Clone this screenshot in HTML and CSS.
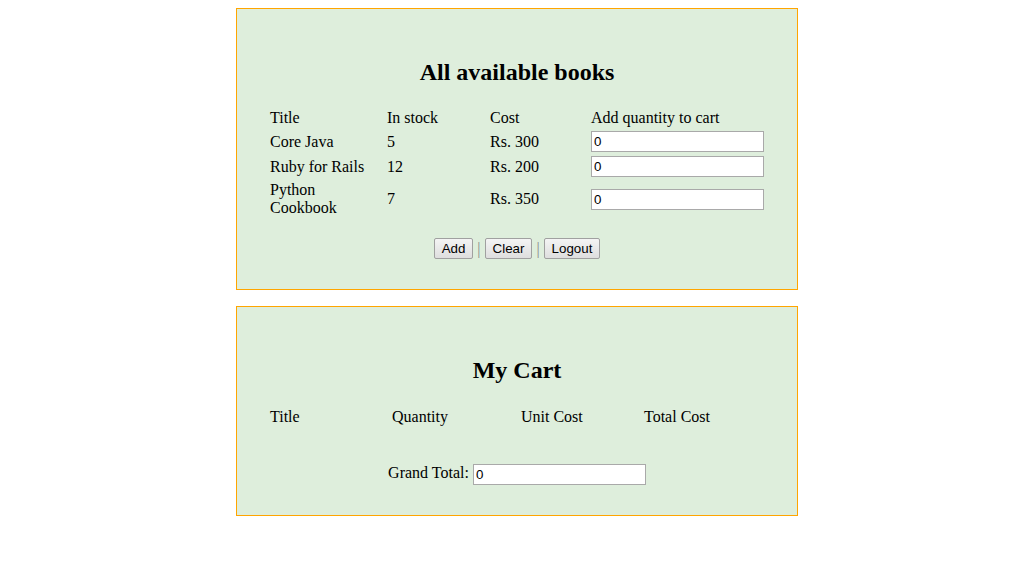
FILE: index.html
```html
<!DOCTYPE html>
<html>
<head>
<meta charset="utf-8">
<title>Books</title>
<link rel="stylesheet" href="styles.css">
</head>
<body>
<div class="panel">
  <h2 class="heading">All available books</h2>
  <table class="grid">
    <colgroup>
      <col class="c-books-1"><col class="c-books-2"><col class="c-books-3"><col class="c-books-4">
    </colgroup>
    <tr><th>Title</th><th>In stock</th><th>Cost</th><th>Add quantity to cart</th></tr>
    <tr><td>Core Java</td><td>5</td><td>Rs. 300</td><td><input class="field" type="text" value="0"></td></tr>
    <tr><td>Ruby for Rails</td><td>12</td><td>Rs. 200</td><td><input class="field" type="text" value="0"></td></tr>
    <tr><td>Python Cookbook</td><td>7</td><td>Rs. 350</td><td><input class="field" type="text" value="0"></td></tr>
  </table>
  <div class="actions">
    <button class="btn" type="button">Add</button>
    <span class="sep">|</span>
    <button class="btn" type="button">Clear</button>
    <span class="sep">|</span>
    <button class="btn" type="button">Logout</button>
  </div>
</div>
<div class="panel cart">
  <h2 class="heading">My Cart</h2>
  <table class="grid">
    <colgroup>
      <col class="c-cart-1"><col class="c-cart-2"><col class="c-cart-3"><col class="c-cart-4">
    </colgroup>
    <tr><th>Title</th><th>Quantity</th><th>Unit Cost</th><th>Total Cost</th></tr>
  </table>
  <div class="total">Grand Total: <input class="field" type="text" value="0"></div>
</div>
</body>
</html>
```
FILE: styles.css
```css
html, body {
  background: #ffffff;
}
body {
  margin: 8px;
  font-family: "Liberation Serif", "Times New Roman", serif;
  font-size: 16px;
  color: #000;
}
.panel {
  width: 500px;
  margin: 0 auto;
  padding: 30px;
  background: #deeedc;
  border: 1px solid #ffa500;
}
.panel.cart {
  margin-top: 16px;
  padding-bottom: 32px;
}
.heading {
  font-size: 24px;
  font-weight: bold;
  text-align: center;
  margin: 20px 0;
}
.cart .heading {
  margin-bottom: 21px;
}
.grid {
  width: 500px;
  table-layout: fixed;
  border-collapse: separate;
  border-spacing: 2px;
}
.grid th, .grid td {
  padding: 1px;
  font-weight: normal;
  text-align: left;
  vertical-align: middle;
}
.c-books-1 { width: 115px; }
.c-books-2 { width: 101px; }
.c-books-3 { width: 99px; }
.c-books-4 { width: 175px; }
.c-cart-1 { width: 120px; }
.c-cart-2 { width: 127px; }
.c-cart-3 { width: 121px; }
.c-cart-4 { width: 122px; }
.field {
  box-sizing: border-box;
  width: 173px;
  height: 21px;
  margin: 0;
  padding: 1px 2px;
  border: 1px solid #a9a9a9;
  background: #fff;
  font-family: "Liberation Sans", Arial, sans-serif;
  font-size: 13.33px;
  color: #000;
  vertical-align: middle;
}
.actions {
  margin-top: 16px;
  padding-bottom: 2px;
  text-align: center;
  line-height: 21px;
  height: 21px;
}
.btn {
  box-sizing: border-box;
  height: 21px;
  margin: 0;
  padding: 0 7px;
  border: 1px solid #a0a0a0;
  border-radius: 2px;
  background: linear-gradient(#f4f4f4, #dedede);
  font-family: "Liberation Sans", Arial, sans-serif;
  font-size: 13.33px;
  color: #000;
  vertical-align: middle;
}
.sep {
  color: #888;
  vertical-align: middle;
}
.total {
  margin-top: 33px;
  text-align: center;
  line-height: 21px;
  height: 21px;
}
```
